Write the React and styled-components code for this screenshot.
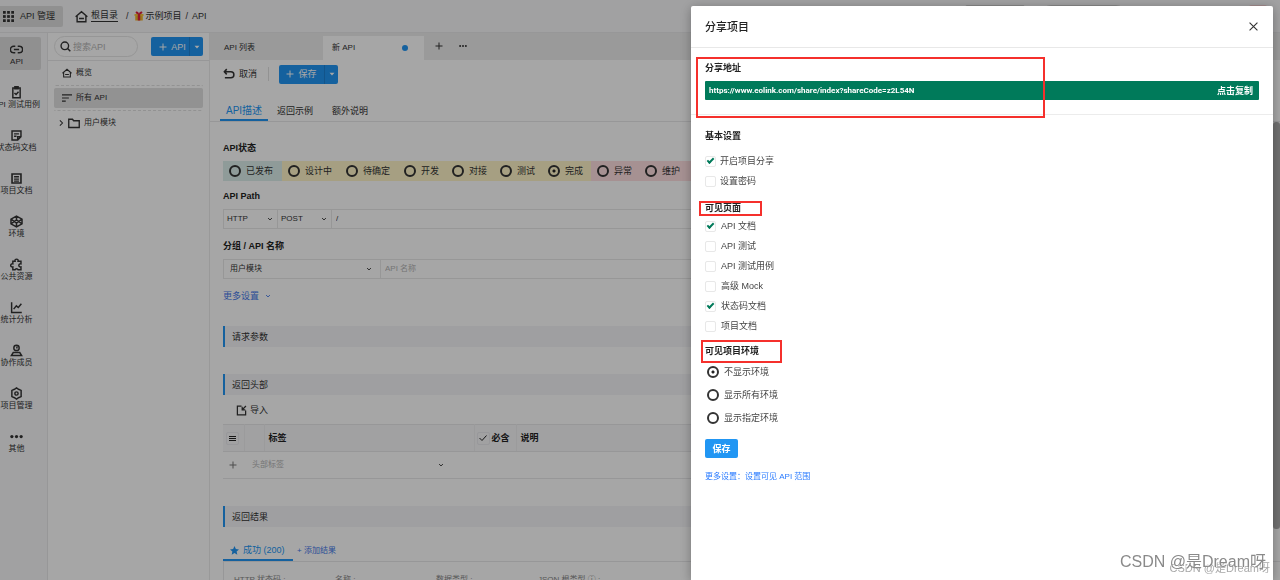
import React, { useState } from "react";
import styled, { createGlobalStyle } from "styled-components";

const GlobalStyle = createGlobalStyle`
  * {
    box-sizing: border-box;
  }
  body {
    margin: 0;
    font-family: "Liberation Sans", "Noto Sans CJK SC", sans-serif;
    font-size: 9px;
    line-height: 14px;
    color: #333;
    overflow: hidden;
  }
  button,
  input,
  select {
    font: inherit;
    color: inherit;
    margin: 0;
  }
  h1, h2, h3 {
    margin: 0;
    font-size: 9px;
    line-height: 14px;
  }
  a {
    color: inherit;
    text-decoration: none;
  }
`;

/* ---------- icons ---------- */

const Svg = ({ size = 12, sw = 1.5, vb = 16, children }) => (
  <svg
    width={size}
    height={size}
    viewBox={`0 0 ${vb} ${vb}`}
    fill="none"
    stroke="currentColor"
    strokeWidth={sw}
    aria-hidden="true"
  >
    {children}
  </svg>
);

const HomeIcon = ({ size }) => (
  <Svg size={size} sw={1.7}>
    <path d="M.8 8.400 8 2l7.200 6.400M2.600 7v7.500h10.800V7M5 10.500h6" />
  </Svg>
);

const ChevronDown = ({ size = 6 }) => (
  <Svg size={size} sw={2.6}>
    <path d="m3 5.500 5 5 5-5" />
  </Svg>
);

const PlusIcon = ({ size = 9, sw = 2 }) => (
  <Svg size={size} sw={sw}>
    <path d="M8 1v14M1 8h14" />
  </Svg>
);

const DotsIcon = ({ size = 12 }) => (
  <Svg size={size}>
    <g fill="currentColor" stroke="none">
      <circle cx="2.300" cy="8" r="2" />
      <circle cx="8" cy="8" r="2" />
      <circle cx="13.700" cy="8" r="2" />
    </g>
  </Svg>
);

const CaretIcon = () => (
  <Svg size={8}>
    <path d="M3 5.500h10L8 11z" fill="currentColor" stroke="none" />
  </Svg>
);

const GridIcon = () => (
  <Svg size={11}>
    <g fill="currentColor" stroke="none">
      {[0, 6, 12].map((y) =>
        [0, 6, 12].map((x) => (
          <rect key={`${x}-${y}`} x={x} y={y} width="4" height="4" />
        ))
      )}
    </g>
  </Svg>
);

const GiftIcon = () => (
  <svg width="10" height="10" viewBox="0 0 20 20" aria-hidden="true">
    <path d="M1 6h18v4H1z" fill="#f5c33b" />
    <path d="M2.500 10h15v9h-15z" fill="#eeb52c" />
    <path d="M7.500 6h5v13h-5z" fill="#e0203a" />
    <path
      d="M10 6.500C5 6.500 2 4 3.500 2S9 1.500 10 5.500c1-4 5-5.500 6.500-3.500S15 6.500 10 6.500z"
      fill="#e0203a"
    />
  </svg>
);

const icons = {
  api: (
    <path d="M6.500 4H4.500a4 4 0 0 0 0 8h2M9.500 4h2a4 4 0 0 1 0 8h-2M4.800 8h6.400" />
  ),
  test: (
    <path d="M3.500 2.500h9v12h-9zM6 .8h4v2.700H6zM5.500 8.500l2 2 3-3.500" />
  ),
  code: <path d="M2.500 2.500h11v7l-4 4h-7zM5 6h6M5 9h3M9.500 13.500v-4h4" />,
  docs: (
    <>
      <path d="M2.500 2.500h11v11h-11z" strokeWidth="2" />
      <path d="M5 5.500h6M5 7.500h6M5 9.500h6M5 11.500h6" strokeWidth="1.300" />
    </>
  ),
  env: (
    <path d="M8 1.300 14.800 5v6L8 14.700 1.200 11V5zM8 1.300V6M8 10v4.700M1.200 5 8 10l6.800-5M1.200 11 8 6l6.800 5" />
  ),
  puzzle: (
    <path d="M3.500 4h2.700a2 2 0 1 1 3.800 0h3.500v3.200a2 2 0 1 0 0 3.800v3.500H10a2 2 0 0 0-3.800 0H3.500V11a2 2 0 1 1 0-3.800z" />
  ),
  chart: <path d="M2 1.500v12.700h12.500M4.500 10l3.300-4 2.400 2 3.800-4.500" />,
  member: (
    <path d="M8 1.500a3.300 3.300 0 1 1 0 6.600 3.300 3.300 0 0 1 0-6.600M8.500 3v2.500M4 10.500h8l2.300 3.700H1.700z" />
  ),
  manage: (
    <>
      <path d="M8 1.200 10.500 2.800 13.700 4.200V11.800L10.500 13.200 8 14.800 5.500 13.200 2.300 11.800V4.200L5.500 2.800z" />
      <circle cx="8" cy="8" r="2" />
    </>
  ),
};

/* ---------- data ---------- */

const menu = [
  { key: "api", label: "API", active: true },
  { key: "test", label: "API 测试用例" },
  { key: "code", label: "状态码文档" },
  { key: "docs", label: "项目文档" },
  { key: "env", label: "环境" },
  { key: "puzzle", label: "公共资源" },
  { key: "chart", label: "统计分析" },
  { key: "member", label: "协作成员" },
  { key: "manage", label: "项目管理" },
  { key: "other", label: "其他" },
];

const statusGroups = [
  { color: "#dcefeb", items: ["已发布"] },
  { color: "#fff5c8", items: ["设计中", "待确定", "开发", "对接", "测试", "完成"] },
  { color: "#ffdfe1", items: ["异常", "维护", "废弃"] },
];

const pages = ["API 文档", "API 测试", "API 测试用例", "高级 Mock", "状态码文档", "项目文档"];
const envs = ["不显示环境", "显示所有环境", "显示指定环境"];

/* ---------- page ---------- */

export default function App() {
  const [status, setStatus] = useState("完成");
  const [env, setEnv] = useState(envs[0]);

  return (
    <Page>
      <GlobalStyle />
      <Header>
        <Workspace type="button">
          <GridIcon />
          API 管理
        </Workspace>
        <Breadcrumb>
          <HomeIcon size={13} />
          <a className="root" href="#root">
            根目录
          </a>
          <span className="slash">/</span>
          <GiftIcon />
          <span className="project">示例项目</span>
          <span>/</span>
          <span>API</span>
        </Breadcrumb>
        <HeaderActions>
          <HeaderPill $filled aria-label="分享" />
          <HeaderPill aria-label="搜索" $wide />
          <Notice />
        </HeaderActions>
      </Header>

      <Body>
        <Sidebar>
          {menu.map((m) => (
            <MenuItem key={m.key} href={`#${m.key}`} $active={m.active}>
              {icons[m.key] ? (
                <Svg size={13} sw={1.8}>
                  {icons[m.key]}
                </Svg>
              ) : (
                <DotsIcon size={13} />
              )}
              <span>{m.label}</span>
            </MenuItem>
          ))}
        </Sidebar>

        <Tree>
          <TreeTop>
            <Search>
              <Svg size={11} sw={2}>
                <circle cx="7" cy="7" r="5.500" />
                <path d="m11 11 4 4" />
              </Svg>
              <input placeholder="搜索API" aria-label="搜索API" />
            </Search>
            <SplitButton>
              <button type="button">
                <PlusIcon size={8} /> API
              </button>
              <button type="button" aria-label="更多">
                <CaretIcon />
              </button>
            </SplitButton>
          </TreeTop>
          <TreeList>
            <TreeRow href="#overview">
              <HomeIcon size={10} />
              概览
            </TreeRow>
            <TreeRow href="#all" $active>
              <Svg size={10} sw={1.8}>
                <path d="M0 3h16M0 8h11M0 13h6" />
              </Svg>
              所有 API
            </TreeRow>
            <TreeRow href="#user" $folder>
              <Svg size={6} sw={2.8}>
                <path d="m5 1 7 7-7 7" />
              </Svg>
              <Svg size={12} sw={1.8}>
                <path d="M1 3h5l1.500 2H15v9H1z" />
              </Svg>
              用户模块
            </TreeRow>
          </TreeList>
        </Tree>

        <Main>
          <TabBar>
            <FileTab href="#list">API 列表</FileTab>
            <FileTab href="#new" $active>
              新 API
              <i />
            </FileTab>
            <TabTool type="button" aria-label="新建">
              <PlusIcon size={8} />
            </TabTool>
            <TabTool type="button" aria-label="更多">
              <DotsIcon size={8} />
            </TabTool>
          </TabBar>

          <Toolbar>
            <Cancel type="button">
              <Svg size={12} sw={2}>
                <path d="M5 1.500 1.800 5 5 8.500M2 5h8.500a4 4 0 0 1 0 8H2.500" />
              </Svg>
              取消
            </Cancel>
            <SplitButton $save>
              <button type="button">
                <PlusIcon size={8} /> 保存
              </button>
              <button type="button" aria-label="更多保存">
                <CaretIcon />
              </button>
            </SplitButton>
          </Toolbar>

          <SubTabs>
            <SubTab href="#desc" $active>
              API描述
            </SubTab>
            <SubTab href="#sample">返回示例</SubTab>
            <SubTab href="#extra">额外说明</SubTab>
          </SubTabs>

          <Form>
            <FieldTitle>API状态</FieldTitle>
            <StatusBar>
              {statusGroups.map((g) => (
                <StatusGroup key={g.color} $color={g.color}>
                  {g.items.map((s) => (
                    <StatusItem key={s} $long={s.length > 2}>
                      <Radio
                        name="status"
                        checked={status === s}
                        onChange={() => setStatus(s)}
                      />
                      {s}
                    </StatusItem>
                  ))}
                </StatusGroup>
              ))}
            </StatusBar>

            <FieldTitle>API Path</FieldTitle>
            <InputRow>
              <SelectBox $width={54}>
                <select aria-label="协议">
                  <option>HTTP</option>
                </select>
                <ChevronDown />
              </SelectBox>
              <SelectBox $width={54}>
                <select aria-label="请求方式">
                  <option>POST</option>
                </select>
                <ChevronDown />
              </SelectBox>
              <TextBox aria-label="API Path" defaultValue="/" />
            </InputRow>

            <FieldTitle>分组 / API 名称</FieldTitle>
            <InputRow>
              <SelectBox $width={157} $indent>
                <select aria-label="分组">
                  <option>用户模块</option>
                </select>
                <ChevronDown />
              </SelectBox>
              <TextBox aria-label="API 名称" placeholder="API 名称" />
            </InputRow>
            <MoreLink href="#more">
              更多设置
              <ChevronDown />
            </MoreLink>

            <SectionBar>请求参数</SectionBar>
            <SectionBar>返回头部</SectionBar>
            <Import type="button">
              <Svg size={11} sw={1.8}>
                <path d="M8 1.500H2v13h12V8M9 7l5.500-5.500M9 2.500V7h4.500" />
              </Svg>
              导入
            </Import>
            <HeadTable>
              <colgroup>
                <col width="21" />
                <col width="20" />
                <col width="210" />
                <col width="42" />
                <col />
              </colgroup>
              <thead>
                <tr>
                  <th>
                    <IconBox>
                      <Svg size={7} sw={1} vb={7}>
                        <path d="M0 1.500h7M0 3.500h7M0 5.500h7" />
                      </Svg>
                    </IconBox>
                  </th>
                  <th />
                  <th>标签</th>
                  <th>
                    <Required>
                      <IconBox>
                        <Svg size={8} sw={2}>
                          <path d="m1 8 5 5 9-10" />
                        </Svg>
                      </IconBox>
                      必含
                    </Required>
                  </th>
                  <th>说明</th>
                </tr>
              </thead>
              <tbody>
                <tr>
                  <td className="add">
                    <PlusIcon size={8} />
                  </td>
                  <td colSpan="2">
                    <TagInput>
                      <input placeholder="头部标签" aria-label="头部标签" />
                      <ChevronDown />
                    </TagInput>
                  </td>
                  <td />
                  <td />
                </tr>
              </tbody>
            </HeadTable>

            <SectionBar $last>返回结果</SectionBar>
            <ResultTabs>
              <ResultTab href="#200">
                <svg width="9" height="9" viewBox="0 0 20 20" fill="currentColor" aria-hidden="true">
                  <path d="m10 0 3 6.800 7 .7-5.300 4.900 1.600 7.300L10 15.800l-6.300 3.900 1.600-7.300L0 7.500l7-.7z" />
                </svg>
                成功 (200)
              </ResultTab>
              <AddResult href="#add">+ 添加结果</AddResult>
            </ResultTabs>
            <ResultMeta>
              <span>HTTP 状态码 :</span>
              <span>名称 :</span>
              <span>数据类型 :</span>
              <span>JSON 根类型 ⓘ :</span>
            </ResultMeta>
          </Form>
        </Main>
      </Body>
      <ScrollThumb />
      <Mask />

      <Drawer role="dialog" aria-labelledby="share-title">
        <DrawerHead>
          <h1 id="share-title">分享项目</h1>
          <button type="button" aria-label="关闭">
            <Svg size={9} sw={2}>
              <path d="m1 1 14 14M15 1 1 15" />
            </Svg>
          </button>
        </DrawerHead>
        <ShareSection>
          <h2>分享地址</h2>
          <ShareBar>
            <span>https://www.eolink.com/share/index?shareCode=z2L54N</span>
            <button type="button">点击复制</button>
          </ShareBar>
          <ShareMark />
        </ShareSection>
        <Settings>
          <h2>基本设置</h2>
          <CheckRow>
            <Check defaultChecked />
            开启项目分享
          </CheckRow>
          <CheckRow>
            <Check />
            设置密码
          </CheckRow>

          <MarkedTitle>
            可见页面
            <PageMark />
          </MarkedTitle>
          {pages.map((p) => (
            <CheckRow key={p} $loose>
              <Check defaultChecked={p === "API 文档" || p === "状态码文档"} />
              {p}
            </CheckRow>
          ))}

          <MarkedTitle $env>
            可见项目环境
            <EnvMark />
          </MarkedTitle>
          {envs.map((e) => (
            <RadioRow key={e}>
              <Radio name="env" checked={env === e} onChange={() => setEnv(e)} />
              {e}
            </RadioRow>
          ))}
          <Save type="button">保存</Save>
          <RangeLink href="#range">更多设置：设置可见 API 范围</RangeLink>
        </Settings>
      </Drawer>
      <SmallWatermark>CSDN @是Dream呀</SmallWatermark>
      <Watermark>CSDN @是Dream呀</Watermark>
    </Page>
  );
}

/* ---------- layout ---------- */

const Page = styled.div`
  display: flex;
  flex-direction: column;
  height: 100vh;
  overflow: hidden;
  background: #fff;
`;

const Header = styled.header`
  display: flex;
  align-items: center;
  flex: none;
  height: 33px;
  background: #f7f7f9;
  border-bottom: 1px solid #e8e8ea;
`;

const Workspace = styled.button`
  display: flex;
  align-items: center;
  gap: 6px;
  height: 21px;
  width: 63px;
  padding: 0 0 0 3px;
  border: 0;
  border-radius: 0 2px 2px 0;
  background: #dedede;
`;

const Breadcrumb = styled.nav`
  display: flex;
  align-items: center;
  margin-left: 12px;
  .root {
    margin-left: 3px;
    border-bottom: 1px solid #333;
    line-height: 11px;
  }
  .slash {
    margin: 0 5px 0 8px;
  }
  .project {
    margin-left: 2px;
  }
  .project ~ span {
    margin-left: 4px;
  }
`;

const HeaderActions = styled.div`
  display: flex;
  gap: 15px;
  margin: 0 13px 0 auto;
`;

const HeaderPill = styled.button`
  width: ${(p) => (p.$wide ? 87 : 60)}px;
  height: 22px;
  border: 1px solid #d0d0d0;
  border-radius: ${(p) => (p.$wide ? 11 : 2)}px;
  background: ${(p) => (p.$filled ? "#d0d0d0" : "transparent")};
`;

const Notice = styled.span`
  width: 18px;
  height: 22px;
  margin-left: 107px;
  border-radius: 2px;
  background: #f7d4d6;
`;

const Body = styled.div`
  display: flex;
  flex: 1;
  min-height: 0;
`;

const Sidebar = styled.nav`
  flex: none;
  width: 48px;
  padding-top: 4px;
  background: #f7f7f9;
  border-right: 1px solid #e8e8ea;
`;

const MenuItem = styled.a`
  display: flex;
  flex-direction: column;
  align-items: center;
  height: 33px;
  width: 49px;
  padding-top: 6px;
  margin: 0 0 10px -8px;
  border-radius: 2px;
  font-size: 8px;
  line-height: 11px;
  white-space: nowrap;
  background: ${(p) => (p.$active ? "#dedede" : "transparent")};
`;

const Tree = styled.aside`
  flex: none;
  width: 162px;
  border-right: 1px solid #ececec;
`;

const TreeTop = styled.div`
  display: flex;
  align-items: center;
  justify-content: space-between;
  height: 28px;
  padding: 0 6px;
  border-bottom: 1px solid #e8e8ea;
`;

const Search = styled.label`
  display: flex;
  align-items: center;
  gap: 2px;
  width: 84px;
  height: 21px;
  padding-left: 5px;
  border: 1px solid #e6e6e6;
  border-radius: 11px;
  input {
    width: 60px;
    padding: 0;
    border: 0;
    outline: 0;
    background: none;
  }
  input::placeholder {
    color: #b4b4b4;
  }
`;

const SplitButton = styled.div`
  display: flex;
  height: 19px;
  border-radius: 2px;
  overflow: hidden;
  color: #fff;
  background: #2196f3;
  button {
    display: flex;
    align-items: center;
    justify-content: center;
    gap: 4px;
    padding: 0;
    border: 0;
    background: none;
  }
  button:first-child {
    width: ${(p) => (p.$save ? 45 : 38)}px;
    padding-left: ${(p) => (p.$save ? 0 : 5)}px;
  }
  button:last-child {
    width: 14px;
    border-left: 1px solid #1c82d4;
  }
`;

const TreeList = styled.div`
  padding: 2px 6px;
`;

const TreeRow = styled.a`
  display: flex;
  align-items: center;
  gap: 4px;
  height: 20px;
  margin-bottom: 5px;
  padding-left: ${(p) => (p.$folder ? 4 : 8)}px;
  border-radius: 2px;
  font-size: 8px;
  background: ${(p) => (p.$active ? "#e0e0e0" : "transparent")};
  outline: ${(p) => (p.$active ? "1px dashed #e0e0e0" : "0")};
  outline-offset: 2px;
  clip-path: inset(-3px 0);
`;

const Main = styled.main`
  flex: 1;
  min-width: 0;
`;

const TabBar = styled.div`
  display: flex;
  align-items: flex-end;
  height: 27px;
  background: #ededed;
`;

const FileTab = styled.a`
  display: flex;
  align-items: center;
  justify-content: space-between;
  height: 24px;
  width: ${(p) => (p.$active ? 101 : 113)}px;
  padding: 0 16px 0 ${(p) => (p.$active ? 9 : 14)}px;
  font-size: 8px;
  background: ${(p) => (p.$active ? "#fff" : "transparent")};
  i {
    width: 6px;
    height: 6px;
    border-radius: 50%;
    background: #2196f3;
  }
`;

const TabTool = styled.button`
  display: flex;
  align-items: center;
  justify-content: center;
  align-self: center;
  width: 24px;
  height: 20px;
  padding: 0 0 2px 6px;
  border: 0;
  background: none;
`;

const Toolbar = styled.div`
  display: flex;
  align-items: center;
  height: 28px;
  padding-left: 13px;
`;

const Cancel = styled.button`
  display: flex;
  align-items: center;
  gap: 4px;
  height: 14px;
  width: 46px;
  margin-right: 10px;
  padding: 0;
  border: 0;
  border-right: 1px solid #e0e0e0;
  background: none;
`;

const SubTabs = styled.nav`
  display: flex;
  gap: 5px;
  margin-top: 13px;
  padding-left: 10px;
  border-bottom: 1px solid #e8e8ea;
`;

const SubTab = styled.a`
  min-width: ${(p) => (p.$active ? 48 : 50)}px;
  height: 20px;
  padding: 3px 0 0 ${(p) => (p.$active ? 6 : 4)}px;
  font-size: ${(p) => (p.$active ? 10 : 9)}px;
  white-space: nowrap;
  color: ${(p) => (p.$active ? "#2196f3" : "inherit")};
  border-bottom: ${(p) => (p.$active ? "2px solid #2196f3" : "0")};
`;

const Form = styled.form`
  padding: 11px 0 0 13px;
`;

const FieldTitle = styled.h3`
  margin: 8px 0 6px;
  color: #222;
`;

const StatusBar = styled.div`
  display: flex;
  overflow: hidden;
`;

const StatusGroup = styled.div`
  display: flex;
  flex: none;
  height: 20px;
  padding-right: 1px;
  background: ${(p) => p.$color};
`;

const StatusItem = styled.label`
  display: flex;
  align-items: center;
  gap: 5px;
  width: ${(p) => (p.$long ? 58 : 48)}px;
  padding-left: 6px;
`;

const Radio = styled.input.attrs({ type: "radio" })`
  appearance: none;
  flex: none;
  width: 12px;
  height: 12px;
  border: 2px solid #333;
  border-radius: 50%;
  background: transparent;
  &:checked {
    background: radial-gradient(circle, #222 0 1px, transparent 2px);
  }
`;

const InputRow = styled.div`
  display: flex;
  height: 20px;
  border: 1px solid #e8e8e8;
  border-right: 0;
  margin-bottom: 10px;
`;

const SelectBox = styled.div`
  display: grid;
  flex: none;
  align-items: center;
  width: ${(p) => p.$width}px;
  border-right: 1px solid #e8e8e8;
  font-size: 8px;
  select {
    grid-area: 1 / 1;
    appearance: none;
    width: 100%;
    padding: 0 0 0 ${(p) => (p.$indent ? 6 : 3)}px;
    border: 0;
    outline: 0;
    background: none;
  }
  svg {
    grid-area: 1 / 1;
    justify-self: end;
    margin-right: ${(p) => (p.$indent ? 8 : 4)}px;
    pointer-events: none;
  }
`;

const TextBox = styled.input`
  flex: 1;
  min-width: 0;
  padding: 0 4px;
  border: 0;
  outline: 0;
  background: none;
  font-size: 8px;
  &::placeholder {
    color: #b4b4b4;
  }
`;

const MoreLink = styled.a`
  display: flex;
  align-items: center;
  gap: 6px;
  width: fit-content;
  margin-bottom: 23px;
  color: #4478e8;
`;

const SectionBar = styled.h3`
  margin: ${(p) => (p.$last ? 27 : 0)}px 0 ${(p) => (p.$last ? 14 : 27)}px;
  padding: 4px 7px 3px;
  border-left: 2px solid #2196f3;
  background: #f5f5f8;
  font-weight: 400;
`;

const Import = styled.button`
  display: flex;
  align-items: center;
  gap: 3px;
  margin: -19px 0 7px 13px;
  padding: 0;
  border: 0;
  background: none;
`;

const HeadTable = styled.table`
  width: 100%;
  table-layout: fixed;
  border-collapse: collapse;
  th,
  td {
    height: 27px;
    padding: 0 0 0 4px;
    text-align: left;
    border-top: 1px solid #e8e8ea;
    border-bottom: 1px solid #e8e8ea;
  }
  th {
    color: #222;
    background: #f7f7f9;
    border-right: 1px solid #eeeef0;
  }
  th:first-child {
    padding-left: 3px;
  }
  td:first-child {
    padding-left: 6px;
  }
  svg {
    display: block;
  }
  .add {
    color: #777;
  }
`;

const IconBox = styled.span`
  display: grid;
  place-items: center;
  flex: none;
  width: 13px;
  height: 13px;
  border: 1px solid #eaeaee;
  border-radius: 2px;
`;

const Required = styled.span`
  display: flex;
  align-items: center;
  gap: 2px;
  margin-left: -2px;
`;

const TagInput = styled.label`
  display: flex;
  align-items: center;
  justify-content: space-between;
  padding-right: 30px;
  font-size: 8px;
  input {
    width: 100px;
    padding: 0 4px;
    border: 0;
    outline: 0;
    background: none;
  }
  input::placeholder {
    color: #b4b4b4;
  }
`;

const ResultTabs = styled.nav`
  display: flex;
  align-items: center;
  border-bottom: 1px solid #e8e8ea;
`;

const ResultTab = styled.a`
  display: flex;
  align-items: center;
  gap: 4px;
  width: 70px;
  height: 20px;
  padding-left: 7px;
  white-space: nowrap;
  color: #2196f3;
  border-bottom: 2px solid #2196f3;
`;

const AddResult = styled.a`
  margin-left: 4px;
  font-size: 8px;
  color: #4478e8;
`;

const ResultMeta = styled.div`
  display: grid;
  grid-template-columns: 101px 101px 102px 1fr;
  padding: 11px 0 0 10px;
  border-left: 1px solid #e8e8ea;
  font-size: 8px;
  color: #888;
`;

const ScrollThumb = styled.div`
  position: fixed;
  top: 122px;
  right: 0;
  width: 7px;
  height: 407px;
  border-radius: 3px;
  background: #b0b0b0;
`;

const Mask = styled.div`
  position: fixed;
  inset: 0;
  background: rgba(0, 0, 0, 0.35);
`;

/* ---------- share drawer ---------- */

const Drawer = styled.section`
  position: fixed;
  top: 6px;
  right: 7px;
  bottom: 0;
  width: calc(50vw - 58px);
  border-radius: 2px 2px 0 0;
  background: #fff;
  box-shadow: 0 2px 12px rgba(0, 0, 0, 0.3);
  h2 {
    color: #222;
  }
`;

const DrawerHead = styled.header`
  display: flex;
  align-items: center;
  justify-content: space-between;
  height: 42px;
  padding: 0 15px 0 14px;
  border-bottom: 1px solid #e8e8e8;
  h1 {
    font-size: 11px;
    font-weight: 500;
    color: #222;
  }
  button {
    display: flex;
    padding: 0;
    border: 0;
    background: none;
  }
`;

const ShareSection = styled.div`
  position: relative;
  padding: 13px 14px 14px;
  border-bottom: 1px solid #ececec;
`;

const ShareBar = styled.div`
  display: flex;
  align-items: center;
  justify-content: space-between;
  height: 19px;
  margin-top: 6px;
  padding: 0 6px 0 4px;
  border-radius: 1px;
  background: #007a5a;
  color: #fff;
  span {
    font-family: Roboto, "Noto Sans CJK SC", sans-serif;
    font-size: 8px;
    font-weight: 700;
  }
  button {
    padding: 0;
    border: 0;
    background: none;
    font-weight: 700;
  }
`;

const Mark = styled.span`
  position: absolute;
  border: 2px solid #f5302c;
  pointer-events: none;
`;

const ShareMark = styled(Mark)`
  top: 9px;
  left: 5px;
  width: 60%;
  height: 61px;
`;

const PageMark = styled(Mark)`
  top: 0;
  left: -6px;
  width: 63px;
  height: 15px;
`;

const EnvMark = styled(Mark)`
  top: -4px;
  left: -4px;
  width: 81px;
  height: 23px;
`;

const Settings = styled.form`
  display: flex;
  flex-direction: column;
  align-items: flex-start;
  padding: 14px;
  h2:first-child {
    margin-bottom: 8px;
  }
`;

const MarkedTitle = styled.h2`
  position: relative;
  margin: ${(p) => (p.$env ? "8px 0 2px" : "10px 0 1px")};
`;

const CheckRow = styled.label`
  display: flex;
  align-items: center;
  gap: ${(p) => (p.$loose ? 5 : 4)}px;
  height: 20px;
  color: #444;
`;

const Check = styled.input.attrs({ type: "checkbox" })`
  appearance: none;
  display: grid;
  place-items: center;
  width: 11px;
  height: 11px;
  border: 1px solid #e8e8e8;
  border-radius: 2px;
  &:checked::before {
    content: "";
    box-sizing: border-box;
    width: 7px;
    height: 4px;
    margin-bottom: 2px;
    border: solid #007a5a;
    border-width: 0 0 2px 2px;
    transform: rotate(-45deg);
  }
`;

const RadioRow = styled.label`
  display: flex;
  align-items: center;
  gap: 5px;
  height: 23px;
  margin-left: 2px;
  color: #444;
`;

const Save = styled.button`
  width: 33px;
  height: 19px;
  margin: 10px 0 12px;
  padding: 0;
  border: 0;
  border-radius: 2px;
  color: #fff;
  background: #2196f3;
  font-weight: 700;
`;

const RangeLink = styled.a`
  font-size: 8px;
  color: #2a7bff;
`;

const Watermark = styled.div`
  position: fixed;
  right: 14px;
  bottom: 8px;
  font-size: 16px;
  line-height: 20px;
  color: #8a8a8a;
  text-shadow: -1px -1px 0 #fff;
`;

const SmallWatermark = styled(Watermark)`
  right: 10px;
  bottom: 5px;
  font-size: 11px;
  line-height: 14px;
  color: #a8a8a8;
`;
